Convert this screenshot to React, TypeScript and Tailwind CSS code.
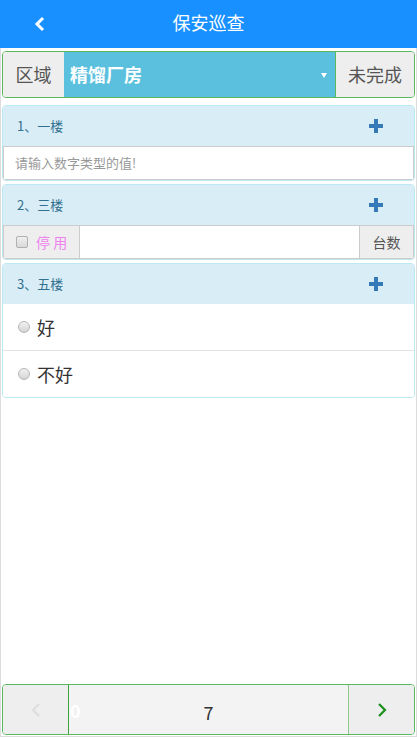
import React from "react";

const font = { fontFamily: '"Noto Sans CJK SC", "Noto Sans", sans-serif' };

function Plus() {
  return (
    <svg width="14" height="14" viewBox="0 0 14 14">
      <rect x="5" y="0" width="4" height="14" fill="#337ab7" />
      <rect x="0" y="5" width="14" height="4" fill="#337ab7" />
    </svg>
  );
}

function PanelHead({ title }: { title: string }) {
  return (
    <div className="flex h-[40px] items-center justify-between bg-[#d9edf7] pl-[14px] pr-[31px] text-[13px] text-[#31708f]">
      <span>{title}</span>
      <Plus />
    </div>
  );
}

function Radio() {
  return (
    <span className="inline-block h-[12px] w-[12px] rounded-full border border-[#b5b5b5] bg-gradient-to-b from-[#f2f2f2] to-[#d4d4d4]" />
  );
}

export default function App() {
  return (
    <div className="flex h-[737px] flex-col bg-white" style={font}>
      <div className="relative flex h-[48px] shrink-0 items-center justify-center bg-[#1890ff] text-[18px] text-white">
        <svg className="absolute left-[33px] top-[16px]" width="14" height="16" viewBox="0 0 14 16">
          <path d="M10 2 L4 8 L10 14" stroke="white" strokeWidth="3" fill="none" />
        </svg>
        <span className="-mt-[3px]">保安巡查</span>
      </div>
      <div className="flex flex-1 flex-col border-x border-b border-[#dcdcdc] px-[1px]">
        <div className="mt-[3px] flex h-[47px] overflow-hidden rounded-[4px] border border-[#5cb85c]">
          <div className="flex w-[61px] items-center justify-center bg-[#eeeeee] text-[18px] text-[#555]">区域</div>
          <div className="relative flex flex-1 items-center bg-[#5bc0de] pl-[6px] text-[18px] font-bold text-white">
            精馏厂房
            <svg className="absolute right-[8px] top-[21px]" width="6" height="5" viewBox="0 0 6 5">
              <path d="M0 0 L6 0 L3 5 Z" fill="white" />
            </svg>
          </div>
          <div className="flex w-[79px] items-center justify-center border-l border-[#5cb85c] bg-[#eeeeee] text-[18px] text-[#555]">未完成</div>
        </div>

        <div className="mt-[7px] overflow-hidden rounded-[4px] border border-[#bce8f1]">
          <PanelHead title="1、一楼" />
          <div className="flex h-[34px] items-center border border-[#cccccc] bg-white pl-[11px] text-[13px] text-[#999]">
            请输入数字类型的值!
          </div>
        </div>

        <div className="mt-[3px] overflow-hidden rounded-[4px] border border-[#bce8f1]">
          <PanelHead title="2、三楼" />
          <div className="flex h-[34px] border border-[#cccccc] bg-white">
            <div className="flex w-[76px] items-center gap-[8px] border-r border-[#ccc] bg-[#eeeeee] pl-[12px] text-[14px] text-[#ee82ee]">
              <span className="inline-block h-[12px] w-[12px] rounded-[2px] border border-[#b0b0b0] bg-gradient-to-b from-[#f0f0f0] to-[#d8d8d8]" />
              <span>停 用</span>
            </div>
            <div className="flex-1 bg-white" />
            <div className="flex w-[54px] items-center justify-center border-l border-[#ccc] bg-[#eeeeee] text-[14px] text-[#555]">台数</div>
          </div>
        </div>

        <div className="mt-[3px] overflow-hidden rounded-[4px] border border-[#bce8f1]">
          <PanelHead title="3、五楼" />
          <div className="bg-white">
            <div className="flex h-[47px] items-center gap-[7px] border-b border-[#e3e3e3] pl-[15px] text-[18px] text-[#333]">
              <Radio />
              <span>好</span>
            </div>
            <div className="flex h-[46px] items-center gap-[7px] pl-[15px] text-[18px] text-[#333]">
              <Radio />
              <span>不好</span>
            </div>
          </div>
        </div>

        <div className="flex-1" />

        <div className="mb-[1px] flex h-[51px] overflow-hidden rounded-[4px] border border-[#5cb85c]">
          <div className="flex w-[65px] items-center justify-center bg-[#eeeeee]">
            <svg width="10" height="14" viewBox="0 0 10 14">
              <path d="M8 1 L2 7 L8 13" stroke="#dddddd" strokeWidth="2.2" fill="none" />
            </svg>
          </div>
          <div className="relative flex flex-1 items-center justify-center border-l border-[#3aa53a] bg-[#f3f3f3] pt-[6px] text-[18px] text-[#333]">
            <span className="absolute left-[1px] top-[12px] text-[18px] font-bold text-white">0</span>
            7
          </div>
          <div className="flex w-[66px] items-center justify-center border-l border-[#8cc98c] bg-[#eeeeee]">
            <svg width="10" height="14" viewBox="0 0 10 14">
              <path d="M2 1 L8 7 L2 13" stroke="#1a8f1a" strokeWidth="2.2" fill="none" />
            </svg>
          </div>
        </div>
      </div>
    </div>
  );
}
